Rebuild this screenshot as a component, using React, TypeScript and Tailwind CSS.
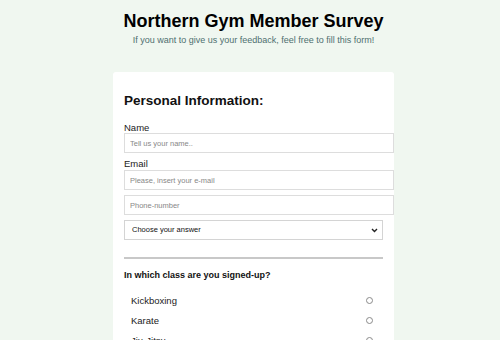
import React from "react";

export default function App() {
  const classes = ["Kickboxing", "Karate", "Jiu-Jitsu"];
  return (
    <div className="min-h-screen bg-[#f0f7f0] font-['Liberation_Sans',Arial,sans-serif] overflow-hidden h-[340px]">
      <div className="ml-[113px] w-[281px]">
        <h1 className="pt-[11px] text-center text-[18px] font-bold leading-[20px] text-black">
          Northern Gym Member Survey
        </h1>
        <p className="mt-[4px] text-center text-[9px] leading-[10px] text-[#4f6f6f]">
          If you want to give us your feedback, feel free to fill this form!
        </p>
        <div className="mt-[27px] h-[300px] rounded-t-[3px] bg-white px-[11px] pt-[21px]">
          <h2 className="text-[13.5px] font-bold leading-[16px] text-[#111]">
            Personal Information:
          </h2>
          <label className="mt-[13px] block text-[9.5px] leading-[11px] text-[#222]">Name</label>
          <input
            className="block h-[20px] w-[270px] border border-[#dddddd] bg-white pl-[5px] text-[7.5px] outline-none placeholder:text-[#888]"
            placeholder="Tell us your name.."
          />
          <label className="mt-[5px] block text-[9.5px] leading-[11px] text-[#222]">Email</label>
          <input
            className="mt-[1px] block h-[20px] w-[270px] border border-[#dddddd] bg-white pl-[5px] text-[7.5px] outline-none placeholder:text-[#888]"
            placeholder="Please, insert your e-mail"
          />
          <input
            className="mt-[5px] block h-[20px] w-[270px] border border-[#dddddd] bg-white pl-[5px] text-[7.5px] outline-none placeholder:text-[#888]"
            placeholder="Phone-number"
          />
          <div className="mt-[5px] flex h-[20px] w-[259px] items-center justify-between border border-[#d4d4d4] bg-white pl-[7px] pr-[4px] text-[7.5px] text-[#111]">
            <span>Choose your answer</span>
            <svg width="7" height="5" viewBox="0 0 7 5">
              <path d="M1 1 L3.5 3.5 L6 1" fill="none" stroke="#222" strokeWidth="1.4" />
            </svg>
          </div>
          <div className="mt-[17px] h-[2px] w-[259px] bg-[#c8c8c8]" />
          <p className="mt-[11px] text-[9px] font-bold leading-[11px] text-[#111]">
            In which class are you signed-up?
          </p>
          <div className="mt-[10px] w-[259px]">
            {classes.map((c) => (
              <div key={c} className="flex h-[20px] items-center justify-between pl-[7px] pr-[10px]">
                <span className="text-[9.5px] text-[#222]">{c}</span>
                <span className="-mt-[2px] h-[7px] w-[7px] rounded-full border border-[#8a8a8a] bg-white" />
              </div>
            ))}
          </div>
        </div>
      </div>
    </div>
  );
}
